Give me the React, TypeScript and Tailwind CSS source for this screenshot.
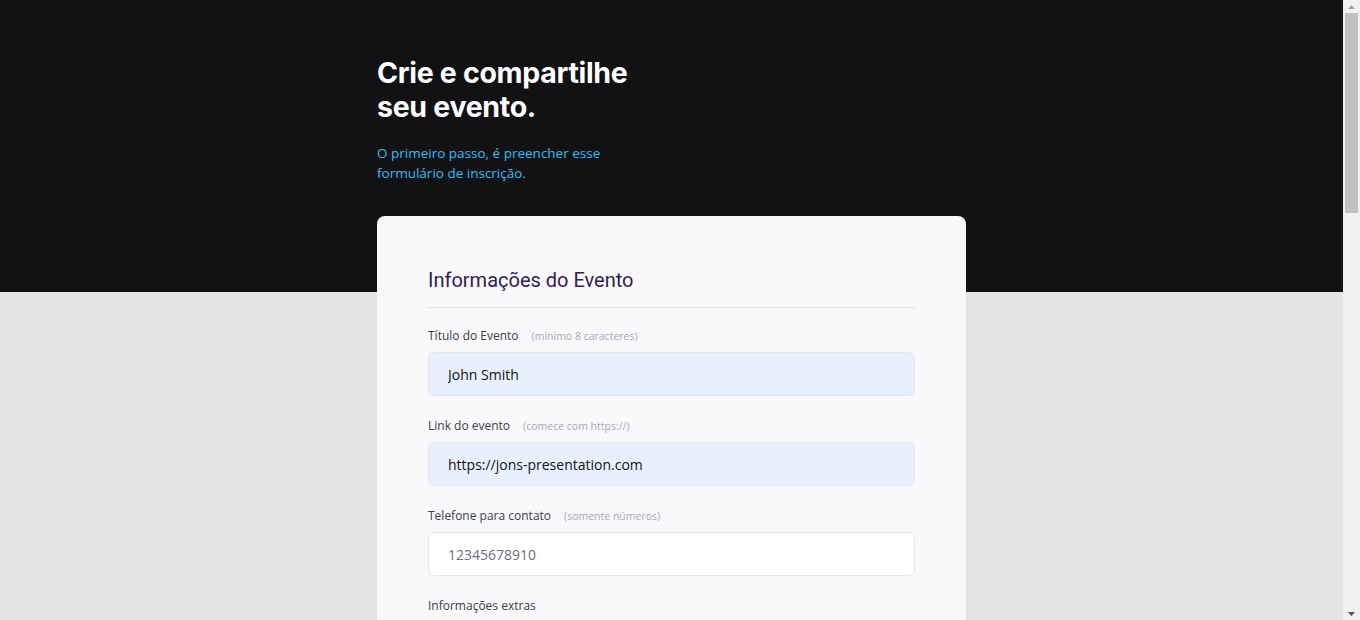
import { ReactNode } from "react";

interface FieldProps {
    label : string,
    hint? : string,
    children : ReactNode
}

function Field({ label, hint, children } : FieldProps) {
    return (
        <div className="flex flex-col">
            <label className="flex items-baseline mb-[7px] leading-[18px]">
                <span className="text-[12px] text-[#3c3c48]">{label}</span>
                {hint && <span className="ml-[13px] text-[10.5px] text-[#a8a8b3]">{hint}</span>}
            </label>
            {children}
        </div>
    );
}

const inputBase = "h-[44px] w-full rounded-[6px] border border-[#e6e6ef] px-[19px] text-[14px] outline-none font-['Open_Sans',sans-serif] placeholder:text-[#6c6c80]";

// desenho da barra de rolagem do navegador
function Scrollbar() {
    return (
        <div className="w-[17px] h-full bg-[#f1f1f1] flex flex-col items-center">
            <div className="h-[13px] w-full flex items-center justify-center">
                <svg width="7" height="4" viewBox="0 0 7 4"><path d="M3.5 0L7 4H0z" fill="#a3a3a3" /></svg>
            </div>
            <div className="w-[13px] h-[200px] bg-[#c1c1c1]" />
            <div className="flex-1" />
            <div className="h-[13px] w-full flex items-center justify-center">
                <svg width="7" height="4" viewBox="0 0 7 4"><path d="M0 0H7L3.5 4z" fill="#505050" /></svg>
            </div>
        </div>
    );
}

export default function App() {
    return (
        <div className="flex h-screen overflow-hidden font-['Open_Sans',sans-serif]">
            <div className="flex-1 h-full overflow-hidden bg-[#e5e5e5]">
                <header className="bg-[#121214] h-[292px]">
                    <div className="w-[589px] mx-auto pt-[56px]">
                        <h1 className="font-['Inter',sans-serif] font-bold text-[28.5px] leading-[34px] tracking-[-0.3px] text-white">
                            Crie e compartilhe<br />seu evento.
                        </h1>
                        <p className="mt-[19px] text-[13.5px] leading-[20px] text-[#33bff5]">
                            O primeiro passo, é preencher esse<br />formulário de inscrição.
                        </p>
                    </div>
                </header>

                <main className="w-[589px] mx-auto -mt-[76px] pb-[80px]">
                    <form className="bg-[#f9f9fb] rounded-[8px] px-[51px] pt-[52px] pb-[56px]">
                        <section>
                            <h2 className="font-['Roboto',sans-serif] font-normal text-[20px] leading-[24px] text-[#322153] pb-[15px] border-b border-[#e1e1e6]">
                                Informações do Evento
                            </h2>
                            <div className="flex flex-col gap-[21px] pt-[19px]">
                                <Field label="Título do Evento" hint="(mínimo 8 caracteres)">
                                    <input className={`${inputBase} bg-[#e8f0fe] text-[#121214]`} defaultValue="John Smith" />
                                </Field>
                                <Field label="Link do evento" hint="(comece com https://)">
                                    <input className={`${inputBase} bg-[#e8f0fe] text-[#121214]`} defaultValue="https://jons-presentation.com" />
                                </Field>
                                <Field label="Telefone para contato" hint="(somente números)">
                                    <input className={`${inputBase} bg-white text-[#6c6c80]`} placeholder="12345678910" />
                                </Field>
                                <Field label="Informações extras">
                                    <textarea className="h-[160px] w-full rounded-[6px] border border-[#e6e6ef] bg-white px-[19px] py-[14px] text-[14px] outline-none resize-none" />
                                </Field>
                            </div>
                        </section>
                    </form>
                </main>
            </div>
            <Scrollbar />
        </div>
    );
}
